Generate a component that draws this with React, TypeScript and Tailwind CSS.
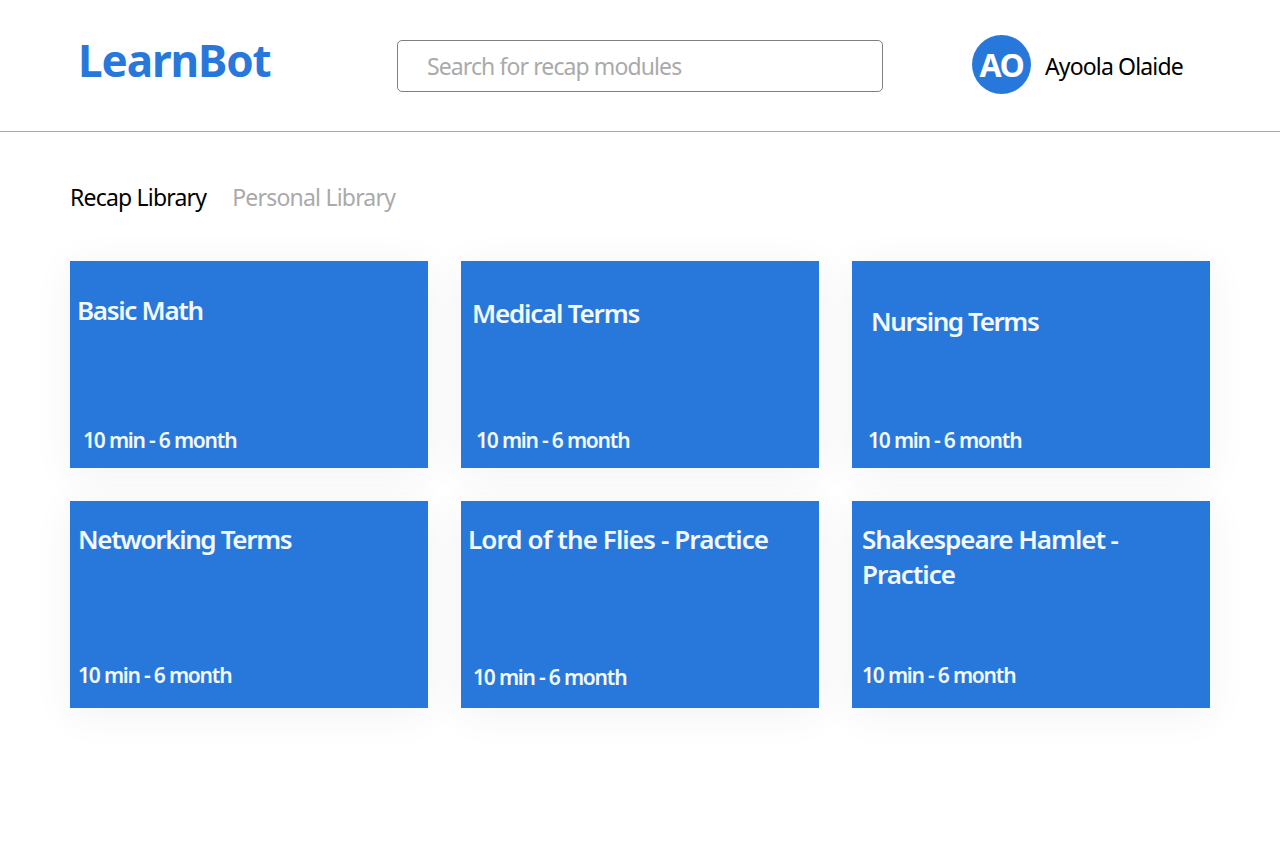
const CARDS = [
  { title: "Basic Math", titleClass: "pl-[7px] pt-[32px] tracking-[-1.3px]", metaClass: "pl-[13px] pb-[14px]" },
  { title: "Medical Terms", titleClass: "pl-[11px] pt-[35px] tracking-[-1.2px]", metaClass: "pl-[15px] pb-[14px]" },
  { title: "Nursing Terms", titleClass: "pl-[19px] pt-[43px] tracking-[-1.4px]", metaClass: "pl-4 pb-[14px]" },
  { title: "Networking Terms", titleClass: "pl-2 pt-[21px] tracking-[-1.35px]", metaClass: "pl-2 pb-[19px]" },
  { title: "Lord of the Flies - Practice", titleClass: "pl-[7px] pt-[21px] tracking-[-0.9px]", metaClass: "pl-3 pb-[17px]" },
  { title: "Shakespeare Hamlet - Practice", titleClass: "pl-[10px] pr-20 pt-[21px] tracking-[-1.05px]", metaClass: "pl-[10px] pb-[19px]" },
];

function Card({ title, titleClass, metaClass }: { title: string; titleClass: string; metaClass: string }) {
  return (
    <div className="flex h-[207px] flex-col justify-between bg-[#2878dc] text-[#f2f8fd] shadow-[0_6px_40px_rgba(0,0,0,0.055)]">
      <h3 className={`text-[26px] leading-[35px] font-semibold ${titleClass}`}>{title}</h3>
      <p className={`text-[21px] leading-[28px] font-semibold tracking-[-1.2px] ${metaClass}`}>10 min - 6 month</p>
    </div>
  );
}

export default function App() {
  return (
    <div className="min-h-[850px] bg-white font-['Noto_Sans',sans-serif]">
      <header className="flex h-[132px] items-start border-b border-[#aaaaaa]">
        <h1 className="ml-[78px] mt-[30px] w-[319px] text-[44px] leading-[60px] font-bold tracking-[-1.1px] text-[#2878dc]">LearnBot</h1>
        <input
          readOnly
          placeholder="Search for recap modules"
          className="mt-10 h-[52px] w-[486px] rounded-[5px] border border-[#808080] bg-white pl-[29px] text-[23px] tracking-[-0.9px] placeholder:text-[#aaaaaa] outline-none"
        />
        <div className="ml-[89px] mt-[35px] flex items-center gap-[14px]">
          <span className="grid h-[59px] w-[59px] place-items-center rounded-full bg-[#2878dc] text-[32px] font-bold tracking-[-1.5px] text-white">AO</span>
          <span className="pt-1 text-[23px] tracking-[-0.85px] text-black">Ayoola Olaide</span>
        </div>
      </header>
      <main className="px-[70px]">
        <nav className="flex gap-[26px] pt-[48px] pb-px text-[23px] leading-[34px] tracking-[-0.8px]">
          <span className="text-black">Recap Library</span>
          <span className="text-[#aaaaaa]">Personal Library</span>
        </nav>
        <div className="mt-[46px] grid w-[1140px] grid-cols-3 gap-[33px]">
          {CARDS.map((c) => (
            <Card key={c.title} {...c} />
          ))}
        </div>
      </main>
    </div>
  );
}
